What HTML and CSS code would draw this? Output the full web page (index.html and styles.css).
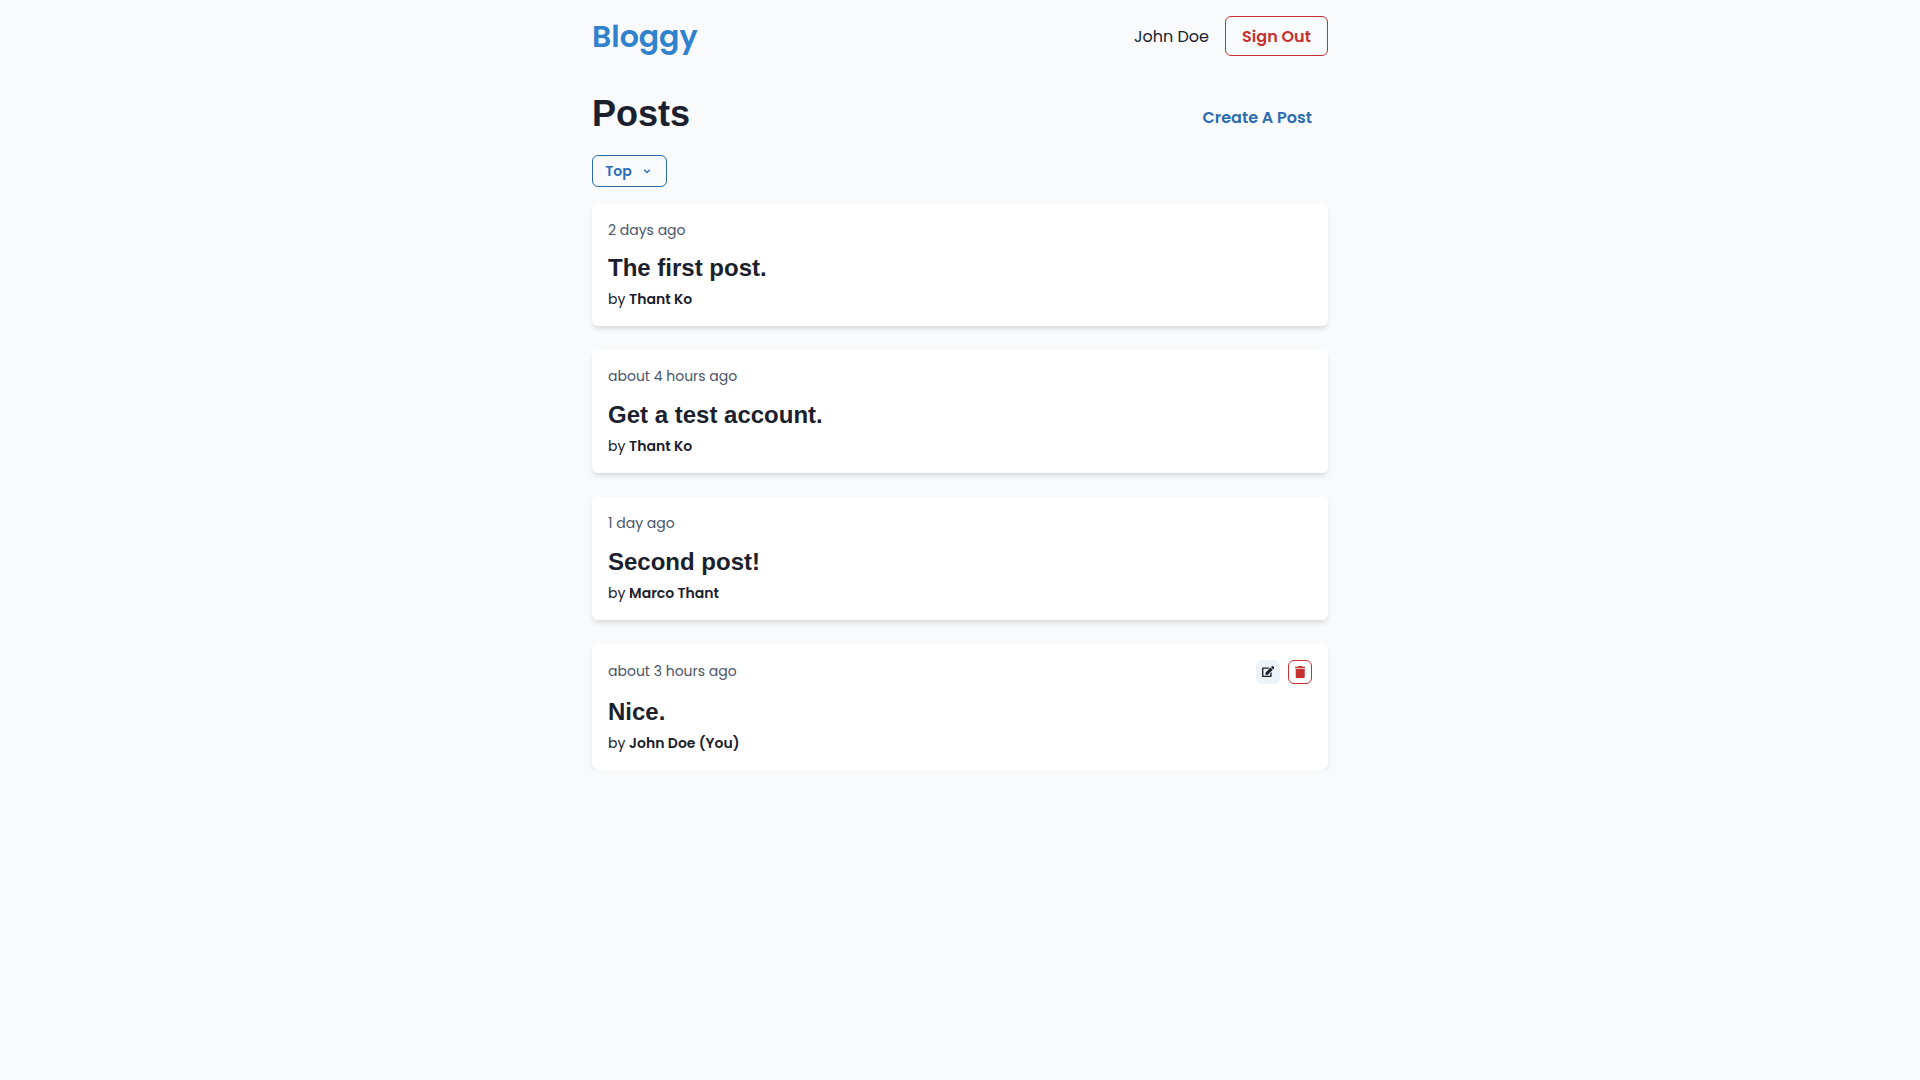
FILE: index.html
```html
<!DOCTYPE html>
<html lang="en">
<head>
<meta charset="utf-8">
<title>Bloggy</title>
<link rel="stylesheet" href="styles.css">
</head>
<body>
<div class="container">
  <header class="header">
    <a class="logo">Bloggy</a>
    <div class="account">
      <span class="user">John Doe</span>
      <button class="btn sign-out"><span>Sign Out</span></button>
    </div>
  </header>
  <main>
    <div class="title-row">
      <h1 class="page-title">Posts</h1>
      <button class="btn create"><span>Create A Post</span></button>
    </div>
    <button class="btn sort"><span>Top</span>
      <svg class="chevron" viewBox="0 0 10 10"><path d="M2.2 3.7 5 6.5 7.8 3.7" fill="none" stroke="currentColor" stroke-width="1.3"/></svg>
    </button>
    <div class="posts">
      <article class="card">
        <div class="meta"><span class="date">2 days ago</span></div>
        <h2 class="card-title">The first post.</h2>
        <p class="author">by <b>Thant Ko</b></p>
      </article>
      <article class="card">
        <div class="meta"><span class="date">about 4 hours ago</span></div>
        <h2 class="card-title">Get a test account.</h2>
        <p class="author">by <b>Thant Ko</b></p>
      </article>
      <article class="card">
        <div class="meta"><span class="date">1 day ago</span></div>
        <h2 class="card-title">Second post!</h2>
        <p class="author">by <b>Marco Thant</b></p>
      </article>
      <article class="card">
        <div class="meta"><span class="date">about 3 hours ago</span>
          <div class="actions">
            <button class="icon-btn edit" aria-label="Edit"><svg viewBox="0 0 576 512" width="12.4" height="11"><path fill="currentColor" d="M402.600 83.200l90.200 90.200c3.800 3.800 3.800 10 0 13.800L274.400 405.600l-92.800 10.300c-12.400 1.400-22.900-9.100-21.500-21.500l10.300-92.800L388.800 83.200c3.800-3.800 10-3.800 13.800 0zm162-22.900l-48.800-48.800c-15.200-15.200-39.900-15.200-55.200 0l-35.400 35.400c-3.800 3.800-3.800 10 0 13.800l90.200 90.200c3.800 3.800 10 3.800 13.800 0l35.400-35.400c15.200-15.300 15.200-40 0-55.200zM384 346.200V448H64V128h229.800c3.200 0 6.200-1.300 8.500-3.500l40-40c7.600-7.600 2.200-20.500-8.500-20.500H48C21.500 64 0 85.500 0 112v352c0 26.500 21.500 48 48 48h352c26.500 0 48-21.500 48-48V306.200c0-10.700-12.900-16-20.500-8.500l-40 40c-2.200 2.300-3.500 5.300-3.500 8.500z"/></svg></button>
            <button class="icon-btn delete" aria-label="Delete"><svg viewBox="0 0 448 512" width="10.5" height="12"><path fill="currentColor" d="M432 32H312l-9.400-18.700A24 24 0 0 0 281.100 0H166.800a23.700 23.700 0 0 0-21.400 13.300L136 32H16A16 16 0 0 0 0 48v32a16 16 0 0 0 16 16h416a16 16 0 0 0 16-16V48a16 16 0 0 0-16-16zM32 128v336a48 48 0 0 0 48 48h288a48 48 0 0 0 48-48V128z"/></svg></button>
          </div>
        </div>
        <h2 class="card-title">Nice.</h2>
        <p class="author">by <b>John Doe (You)</b></p>
      </article>
    </div>
  </main>
</div>
</body>
</html>
```
FILE: styles.css
```css
* { box-sizing: border-box; margin: 0; padding: 0; }
body {
  background: #f9fafc;
  color: #1a202c;
  font-family: Poppins, Inter, sans-serif;
  font-size: 16px;
  line-height: 1.5;
}
.container { width: 736px; margin: 0 auto; }
.header { display: flex; justify-content: space-between; align-items: center; height: 72px; }
.logo { font-size: 30px; font-weight: 600; color: #3182ce; line-height: 45px; }
.account { display: flex; align-items: center; gap: 16px; }
.user { white-space: nowrap; padding-top: 2px; }
.btn {
  display: flex; align-items: center; justify-content: center;
  background: transparent; border: 1px solid transparent; border-radius: 6px;
  font: 600 16px/1.2 Poppins, Inter, sans-serif; white-space: nowrap;
}
.sign-out { width: 103px; height: 40px; padding-top: 2px; color: #c53030; border-color: #c53030; }
.title-row { display: flex; justify-content: space-between; align-items: flex-end; height: 45px; margin-top: 20px; }
.page-title { align-self: flex-start; font: 700 36px/43px "Liberation Sans", Arial, sans-serif; }
.create { height: 40px; padding: 2px 16px 0; color: #2b6cb0; border: 0; }
.sort { width: 75px; height: 32px; margin-top: 18px; padding-right: 2px; gap: 10px; font-size: 14px; color: #2b6cb0; border-color: #2b6cb0; }
.chevron { width: 10px; height: 10px; }
.posts { display: flex; flex-direction: column; gap: 24px; margin-top: 16.6px; }
.card {
  padding: 16px; background: #fff; border-radius: 6px;
  box-shadow: 0 4px 6px -1px rgba(0, 0, 0, .1), 0 2px 4px -1px rgba(0, 0, 0, .06);
}
.meta { display: flex; justify-content: space-between; align-items: center; }
.date { font-size: 14px; line-height: 21px; color: #4a5568; }
.card-title { margin-top: 13.8px; font: 700 24px/28.8px "Liberation Sans", Arial, sans-serif; }
.author { margin-top: 6.2px; font-size: 14px; line-height: 21px; }
.author b { font-weight: 600; }
.actions { display: flex; gap: 8px; }
.icon-btn { display: flex; align-items: center; justify-content: center; width: 24px; height: 24px; border: 0; border-radius: 6px; }
.edit { background: #edf2f7; color: #1a202c; }
.delete { background: #fff; color: #c53030; border: 1px solid #c53030; }
```
